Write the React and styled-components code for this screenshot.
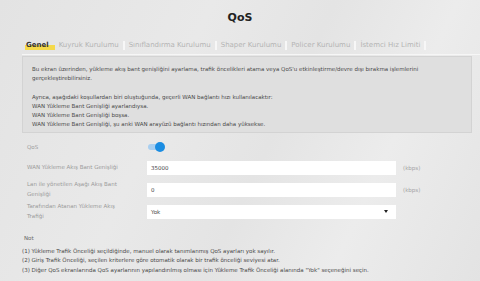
import React from "react"
import styled, { createGlobalStyle } from "styled-components"

const GlobalStyle = createGlobalStyle`
    html, body {
        margin: 0;
        padding: 0;
    }
    body {
        width: 480px;
        height: 281px;
        overflow: hidden;
        font-family: "DejaVu Sans", "Liberation Sans", sans-serif;
        background: linear-gradient(115deg, #e3e3e3 0%, #e9e9e9 35%, #e4e4e4 55%, #ececec 75%, #e3e3e3 100%);
    }
`

const tabs = ["Kuyruk Kurulumu", "Sınıflandırma Kurulumu", "Shaper Kurulumu", "Policer Kurulumu", "İstemci Hız Limiti"]

const Page = styled.div`
    width: 480px;
    height: 281px;
    display: flex;
    flex-direction: column;
`

const Title = styled.h1`
    margin: 0;
    height: 34px;
    display: flex;
    align-items: center;
    justify-content: center;
    font-size: 11px;
    font-weight: 600;
    color: #222;
`

const TabBar = styled.div`
    display: flex;
    align-items: flex-end;
    margin-left: 22px;
    padding: 0 0 4px 3px;
    height: 21px;
    box-sizing: border-box;
    border-bottom: 1px solid #f6f6f6;
`

const Tab = styled.div`
    font-size: 7px;
    color: ${({ active }) => (active ? "#333" : "#b4b4b4")};
    font-weight: ${({ active }) => (active ? 700 : 400)};
    padding: 0 4px 0 ${({ active }) => (active ? 1 : 4)}px;
    border-right: 2px solid ${({ active }) => (active ? "transparent" : "#f7f7f7")};
    line-height: 9px;
    background: ${({ active }) => (active ? "linear-gradient(to bottom, transparent 50%, #f5d94a 50%)" : "none")};
`

const InfoBox = styled.div`
    margin: 1px 8px 0 22px;
    padding: 8px 9px 3px;
    background: #dfdfdf;
    border: 1px solid #d3d3d3;
    font-size: 5.5px;
    line-height: 9.2px;
    color: #4a4a4a;
    p {
        margin: 0;
    }
`

const Gap = styled.div`
    height: 9.2px;
`

const Form = styled.div`
    margin: 8px 0 0 27px;
    display: flex;
    flex-direction: column;
    gap: 7px;
`

const Row = styled.div`
    display: flex;
    align-items: center;
    height: ${({ h }) => h || 15}px;
`

const Label = styled.div`
    width: 120px;
    font-size: 5.5px;
    line-height: 9.5px;
    color: #9b9b9b;
`

const Field = styled.div`
    width: 249px;
    height: 14px;
    background: #fff;
    display: flex;
    align-items: center;
    justify-content: space-between;
    padding: 0 8px 0 4px;
    box-sizing: border-box;
    font-size: 5.5px;
    color: #444;
`

const Unit = styled.span`
    margin-left: 7px;
    font-size: 5.5px;
    color: #a5a5a5;
`

const Toggle = styled.div`
    position: relative;
    width: 16px;
    height: 6px;
    border-radius: 3px;
    background: #a9cff0;
    margin-left: 1px;
    &:after {
        content: "";
        position: absolute;
        right: -1px;
        top: -2px;
        width: 10px;
        height: 10px;
        border-radius: 50%;
        background: #1b8de2;
    }
`

const Arrow = styled.span`
    width: 0;
    height: 0;
    border-left: 2px solid transparent;
    border-right: 2px solid transparent;
    border-top: 3px solid #222;
`

const Notes = styled.div`
    margin: 15px 0 0 22px;
    font-size: 5.5px;
    line-height: 9.5px;
    color: #4a4a4a;
    p {
        margin: 0;
    }
`

const NoteTitle = styled.p`
    margin-bottom: 3px !important;
    padding-left: 2px;
    color: #666;
`

export default function App() {
    return (
        <Page>
            <GlobalStyle />
            <Title>QoS</Title>
            <TabBar>
                <Tab active>Genel</Tab>
                {tabs.map((t) => (
                    <Tab key={t}>{t}</Tab>
                ))}
            </TabBar>
            <InfoBox>
                <p>Bu ekran üzerinden, yükleme akış bant genişliğini ayarlama, trafik öncelikleri atama veya QoS'u etkinleştirme/devre dışı bırakma işlemlerini gerçekleştirebilirsiniz.</p>
                <Gap />
                <p>Ayrıca, aşağıdaki koşullardan biri oluştuğunda, geçerli WAN bağlantı hızı kullanılacaktır:</p>
                <p>WAN Yükleme Bant Genişliği ayarlandıysa.</p>
                <p>WAN Yükleme Bant Genişliği boşsa.</p>
                <p>WAN Yükleme Bant Genişliği, şu anki WAN arayüzü bağlantı hızından daha yüksekse.</p>
            </InfoBox>
            <Form>
                <Row h={12}>
                    <Label>QoS</Label>
                    <Toggle />
                </Row>
                <Row>
                    <Label>WAN Yükleme Akış Bant Genişliği</Label>
                    <Field>35000</Field>
                    <Unit>(kbps)</Unit>
                </Row>
                <Row>
                    <Label>Lan ile yönetilen Aşağı Akış Bant<br />Genişliği</Label>
                    <Field>0</Field>
                    <Unit>(kbps)</Unit>
                </Row>
                <Row>
                    <Label>Tarafından Atanan Yükleme Akış<br />Trafiği</Label>
                    <Field>
                        Yok
                        <Arrow />
                    </Field>
                </Row>
            </Form>
            <Notes>
                <NoteTitle>Not</NoteTitle>
                <p>(1) Yükleme Trafik Önceliği seçildiğinde, manuel olarak tanımlanmış QoS ayarları yok sayılır.</p>
                <p>(2) Giriş Trafik Önceliği, seçilen kriterlere göre otomatik olarak bir trafik önceliği seviyesi atar.</p>
                <p>(3) Diğer QoS ekranlarında QoS ayarlarının yapılandırılmış olması için Yükleme Trafik Önceliği alanında "Yok" seçeneğini seçin.</p>
            </Notes>
        </Page>
    )
}
